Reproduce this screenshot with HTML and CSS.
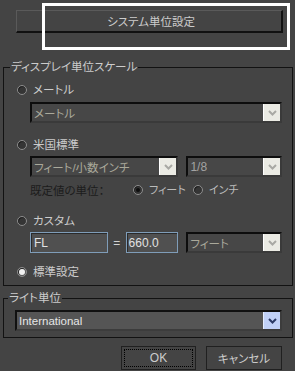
FILE: index.html
```html
<!DOCTYPE html>
<html lang="ja">
<head>
<meta charset="utf-8">
<link rel="stylesheet" href="styles.css">
</head>
<body>
<div class="dialog">
  <div class="top-wrap">
    <div class="sys-btn">システム単位設定</div>
  </div>

  <fieldset class="group g1">
    <legend>ディスプレイ単位スケール</legend>
    <div class="row r1"><span class="radio"></span><span class="lbl">メートル</span></div>
    <div class="indent d1">
      <div class="combo w-full"><span class="ctext dis">メートル</span><span class="cbtn"><svg width="9" height="6" viewBox="0 0 9 6"><polyline points="1,1 4.5,4.5 8,1" fill="none" stroke="#a9a9a4" stroke-width="2"/></svg></span></div>
    </div>
    <div class="row r2"><span class="radio"></span><span class="lbl">米国標準</span></div>
    <div class="indent d2 split">
      <div class="combo w-a"><span class="ctext dis">フィート/小数インチ</span><span class="cbtn"><svg width="9" height="6" viewBox="0 0 9 6"><polyline points="1,1 4.5,4.5 8,1" fill="none" stroke="#a9a9a4" stroke-width="2"/></svg></span></div>
      <div class="combo w-b"><span class="ctext dis2 latin">1/8</span><span class="cbtn"><svg width="9" height="6" viewBox="0 0 9 6"><polyline points="1,1 4.5,4.5 8,1" fill="none" stroke="#a9a9a4" stroke-width="2"/></svg></span></div>
    </div>
    <div class="indent row r3">
      <span class="dlbl">既定値の単位：</span>
      <span class="opt opt1"><span class="radio on-dark"></span><span class="lbl dim">フィート</span></span>
      <span class="opt"><span class="radio"></span><span class="lbl dim">インチ</span></span>
    </div>
    <div class="row r4"><span class="radio"></span><span class="lbl">カスタム</span></div>
    <div class="indent d3 split">
      <div class="field f-name latin">FL</div>
      <span class="eq latin">=</span>
      <div class="field f-val latin">660.0</div>
      <div class="combo w-b"><span class="ctext dis">フィート</span><span class="cbtn"><svg width="9" height="6" viewBox="0 0 9 6"><polyline points="1,1 4.5,4.5 8,1" fill="none" stroke="#a9a9a4" stroke-width="2"/></svg></span></div>
    </div>
    <div class="row r5"><span class="radio on-light"></span><span class="lbl">標準設定</span></div>
  </fieldset>

  <fieldset class="group g2">
    <legend>ライト単位</legend>
    <div class="combo active"><span class="ctext light">International</span><span class="cbtn blue"><svg width="9" height="6" viewBox="0 0 9 6"><polyline points="1,1 4.5,4.5 8,1" fill="none" stroke="#2b3a66" stroke-width="2"/></svg></span></div>
  </fieldset>

  <div class="actions">
    <div class="btn ok"><span class="focus latin">OK</span></div>
    <div class="btn">キャンセル</div>
  </div>

  <div class="highlight"></div>
</div>
</body>
</html>
```

FILE: styles.css
```css
html, body {
  margin: 0;
  padding: 0;
  background: #444444;
}
body {
  width: 295px;
  height: 371px;
  overflow: hidden;
  font-family: "Liberation Sans", "Noto Sans CJK JP", sans-serif;
  font-size: 11px;
  color: #cccccc;
}
.latin {
  font-size: 12px;
}
.dialog {
  position: relative;
  width: 295px;
  height: 371px;
  padding-top: 10px;
  box-sizing: border-box;
}
.top-wrap {
  padding-left: 16px;
}
.sys-btn {
  width: 267px;
  height: 23px;
  box-sizing: border-box;
  border-top: 1px solid #5a5a5a;
  border-left: 1px solid #5a5a5a;
  border-bottom: 2px solid #111;
  border-right: 2px solid #111;
  display: flex;
  align-items: center;
  justify-content: center;
  color: #cccccc;
  font-size: 11.5px;
  font-feature-settings: "palt";
  padding-left: 4px;
}
.highlight {
  position: absolute;
  left: 42px;
  top: 3px;
  width: 248px;
  height: 47px;
  box-sizing: border-box;
  border: 3px solid #ffffff;
}
.group {
  margin: 0 2px 0 3px;
  border: 1px solid #121212;
  padding: 8px 10px 4px 13px;
  min-width: 0;
}
.group legend {
  margin-left: -7px;
  padding: 0 1px;
  height: 14px;
  line-height: 14px;
  font-size: 11.5px;
  font-feature-settings: "palt";
  color: #cccccc;
}
.g1 {
  margin-top: 27px;
  height: 226px;
  box-sizing: border-box;
}
.g2 {
  margin-top: 5px;
  padding: 5px 10px 6px 11px;
}
.row {
  display: flex;
  align-items: center;
  height: 16px;
}
.lbl {
  margin-left: 6px;
  font-feature-settings: "palt";
  line-height: 16px;
  font-size: 11.5px;
}
.lbl.dim {
  color: #bbbbbb;
  font-size: 11px;
}
.indent {
  padding-left: 13px;
}
.d1 { margin-top: 4px; }
.r2 { margin-top: 14px; }
.d2 { margin-top: 3px; }
.r3 { margin-top: 5px; }
.r4 { margin-top: 15px; }
.d3 { margin-top: 3px; }
.r5 { margin-top: 11px; }
.split {
  display: flex;
  align-items: center;
}
.radio {
  width: 10px;
  height: 10px;
  box-sizing: border-box;
  border-radius: 50%;
  background: #353535;
  border: 1px solid #8d8d8d;
  box-shadow: inset 1px 1px 0 #1e1e1e;
  flex: none;
  position: relative;
}
.radio.on-dark::after,
.radio.on-light::after {
  content: "";
  position: absolute;
  left: 2px;
  top: 2px;
  width: 4px;
  height: 4px;
  border-radius: 50%;
  background: #0e0e0e;
}
.radio.on-light {
  background: #5a5a5a;
}
.radio.on-light::after {
  left: 1px;
  top: 1px;
  width: 6px;
  height: 6px;
  background: #f2f2f2;
}
.dlbl {
  width: 103px;
  color: #1c1c1c;
  font-size: 11.5px;
  font-feature-settings: "palt";
}
.opt {
  display: flex;
  align-items: center;
}
.opt1 {
  width: 60px;
}
.combo {
  height: 21px;
  box-sizing: border-box;
  border-top: 2px solid #0d0d0d;
  border-left: 2px solid #0d0d0d;
  border-bottom: 2px solid #3a3a3a;
  border-right: 2px solid #3a3a3a;
  background: #474747;
  display: flex;
  align-items: stretch;
}
.combo.w-full { width: 252px; }
.combo.w-a { width: 149px; }
.combo.w-b { width: 96px; margin-left: auto; }
.d2 .w-b, .d3 .w-b { margin-left: 8px; }
.ctext {
  flex: 1;
  display: flex;
  align-items: center;
  padding-left: 2px;
  font-size: 11.5px;
  font-feature-settings: "palt";
  overflow: hidden;
  white-space: nowrap;
}
.ctext.dis { color: #aaa99b; }
.ctext.dis2 { color: #a3a3a3; font-size: 12px; }
.ctext.light { color: #e6e6e6; font-size: 11.5px; padding-left: 2px; }
.cbtn {
  width: 17px;
  flex: none;
  background: #ebebe4;
  border-left: 1px solid #ffffff;
  display: flex;
  align-items: center;
  justify-content: center;
  box-sizing: border-box;
}
.cbtn.blue {
  background: #c1d1f8;
  border-left: 1px solid #e4ecff;
}
.combo.active {
  width: 267px;
  background: #555555;
  border-top: 2px solid #111;
  border-left: 2px solid #111;
  border-bottom: 2px solid #3c3c3c;
  border-right: 2px solid #3c3c3c;
}
.field {
  height: 21px;
  box-sizing: border-box;
  border: 1px solid #7f9db9;
  box-shadow: inset 1px 1px 0 #2a2a2a;
  background: #505050;
  color: #e2e2e2;
  display: flex;
  align-items: center;
  padding-left: 3px;
}
.f-name { width: 78px; }
.f-val { width: 53px; padding-left: 2px; }
.eq {
  width: 18px;
  text-align: center;
  color: #d2d2d2;
}
.actions {
  display: flex;
  justify-content: flex-end;
  gap: 10px;
  margin-top: 8px;
  padding-right: 13px;
}
.btn {
  width: 75px;
  height: 24px;
  box-sizing: border-box;
  border: 1px solid #202020;
  display: flex;
  align-items: center;
  justify-content: center;
  color: #cccccc;
  font-size: 11.5px;
  font-feature-settings: "palt";
}
.btn + .btn { width: 76px; }
.btn.ok {
  padding: 2px;
}
.focus {
  width: 100%;
  height: 100%;
  box-sizing: border-box;
  border: 1px dotted #000;
  display: flex;
  align-items: center;
  justify-content: center;
}
```
